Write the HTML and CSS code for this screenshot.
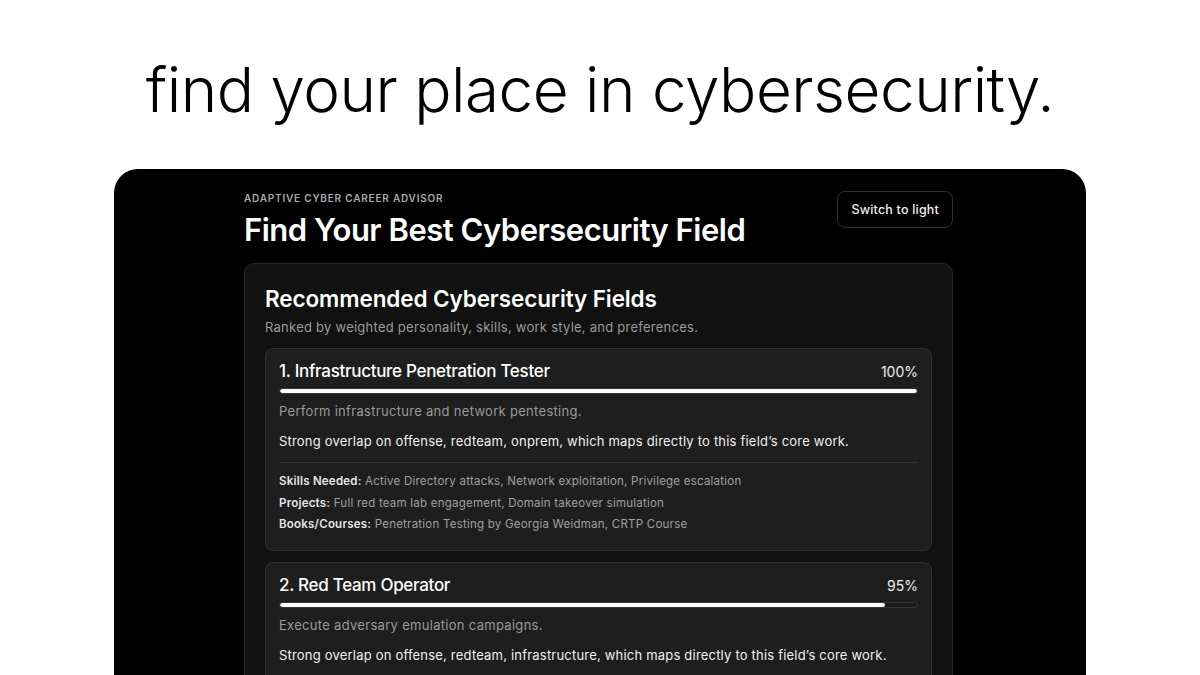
FILE: index.html
```html
<!DOCTYPE html>
<html lang="en">
<head>
<meta charset="utf-8">
<title>Find your place in cybersecurity</title>
<link rel="stylesheet" href="styles.css">
</head>
<body>
<h1 class="hero">find your place in cybersecurity.</h1>
<div class="panel">
  <div class="wrap">
    <header class="top">
      <div class="top-text">
        <div class="eyebrow">ADAPTIVE CYBER CAREER ADVISOR</div>
        <h2 class="title">Find Your Best Cybersecurity Field</h2>
      </div>
      <button class="switch">Switch to light</button>
    </header>
    <section class="results">
      <h3 class="results-title">Recommended Cybersecurity Fields</h3>
      <p class="results-sub">Ranked by weighted personality, skills, work style, and preferences.</p>
      <article class="item">
        <div class="item-head">
          <span class="item-name">1. Infrastructure Penetration Tester</span>
          <span class="item-pct">100%</span>
        </div>
        <div class="track"><div class="fill" style="width:100%"></div></div>
        <p class="desc">Perform infrastructure and network pentesting.</p>
        <p class="why">Strong overlap on offense, redteam, onprem, which maps directly to this field’s core work.</p>
        <div class="details">
          <p><b>Skills Needed:</b> Active Directory attacks, Network exploitation, Privilege escalation</p>
          <p><b>Projects:</b> Full red team lab engagement, Domain takeover simulation</p>
          <p><b>Books/Courses:</b> Penetration Testing by Georgia Weidman, CRTP Course</p>
        </div>
      </article>
      <article class="item">
        <div class="item-head">
          <span class="item-name">2. Red Team Operator</span>
          <span class="item-pct">95%</span>
        </div>
        <div class="track"><div class="fill" style="width:95%"></div></div>
        <p class="desc">Execute adversary emulation campaigns.</p>
        <p class="why">Strong overlap on offense, redteam, infrastructure, which maps directly to this field’s core work.</p>
        <div class="details">
          <p><b>Skills Needed:</b> C2 frameworks, OPSEC, Social engineering</p>
          <p><b>Projects:</b> Adversary emulation plan, Custom C2 lab</p>
          <p><b>Books/Courses:</b> Red Team Development and Operations, CRTO Course</p>
        </div>
      </article>
    </section>
  </div>
</div>
</body>
</html>
```

FILE: styles.css
```css
* { box-sizing: border-box; }
html, body { height: 100%; }
body {
  margin: 0;
  background: #fff;
  overflow: hidden;
  font-family: "Inter", "Noto Sans", sans-serif;
}
.hero {
  margin: 0;
  padding-top: 50px;
  height: 169px;
  text-align: center;
  font-family: "Inter", "Noto Sans", sans-serif;
  font-weight: 300;
  font-size: 62px;
  line-height: 80px;
  color: #000;
  letter-spacing: -0.5px;
}
.panel {
  margin: 0 114px;
  height: 700px;
  background: #000;
  border-radius: 24px 24px 0 0;
  color: #fff;
}
.wrap {
  width: 709px;
  margin: 0 133px 0 130px;
  padding-top: 22px;
}
.top {
  display: flex;
  justify-content: space-between;
  align-items: flex-start;
}
.eyebrow {
  font-size: 10px;
  letter-spacing: 0.8px;
  color: #a8a8a8;
  font-weight: 600;
  line-height: 14px;
}
.title {
  margin: 5px 0 0;
  font-size: 31px;
  font-weight: 600;
  letter-spacing: -0.5px;
  line-height: 40px;
}
.switch {
  height: 37px;
  padding: 0 13px;
  background: #000;
  color: #eee;
  border: 1px solid #2e2e2e;
  border-radius: 8px;
  font-family: inherit;
  font-size: 12.5px;
  font-weight: 500;
  letter-spacing: 0.2px;
}
.results {
  margin-top: 13px;
  background: #111;
  border: 1px solid #262626;
  border-radius: 10px;
  padding: 20px 20px 12px;
}
.results-title {
  margin: 0;
  font-size: 22.5px;
  font-weight: 600;
  letter-spacing: -0.1px;
  line-height: 30px;
}
.results-sub {
  margin: 4px 0 12px;
  font-size: 13px;
  letter-spacing: 0.25px;
  color: #9a9a9a;
  line-height: 18px;
}
.item {
  background: #1e1e1e;
  border: 1px solid #303030;
  border-radius: 8px;
  padding: 10px 13px 14px;
  margin-bottom: 11px;
}
.item-head {
  display: flex;
  justify-content: space-between;
  align-items: baseline;
}
.item-name {
  font-size: 17px;
  font-weight: 500;
  letter-spacing: -0.3px;
  line-height: 24px;
}
.item-pct {
  font-size: 14px;
  color: #eee;
}
.track {
  margin-top: 5px;
  height: 6px;
  background: #1a1a1a;
  border: 1px solid #353535;
  border-radius: 4px;
  overflow: hidden;
}
.fill {
  height: 100%;
  background: #fff;
  border-radius: 4px;
}
.desc {
  margin: 8px 0 0;
  font-size: 13px;
  letter-spacing: 0.3px;
  color: #9a9a9a;
  line-height: 18px;
}
.why {
  margin: 11px 0 0;
  font-size: 13px;
  letter-spacing: 0.2px;
  color: #f0f0f0;
  line-height: 20px;
}
.details {
  margin-top: 11px;
  border-top: 1px solid #333;
  padding-top: 8px;
}
.details p {
  margin: 0;
  font-size: 11.5px;
  letter-spacing: 0.23px;
  line-height: 21.5px;
  color: #a0a0a0;
}
.details b {
  color: #e6e6e6;
  font-weight: 600;
}
```
